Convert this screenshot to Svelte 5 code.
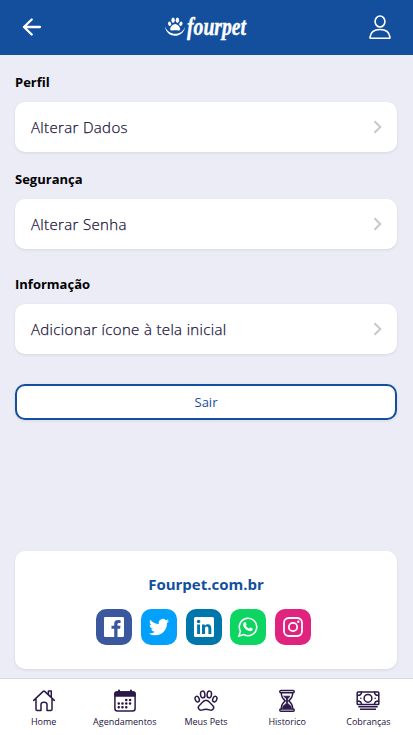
<script>
    const sections = [
        {title: 'Perfil', option: 'Alterar Dados'},
        {title: 'Segurança', option: 'Alterar Senha'},
        {title: 'Informação', option: 'Adicionar ícone à tela inicial'},
    ];

    const socials = ['facebook', 'twitter', 'linkedin', 'whatsapp', 'instagram'];

    const tabs = [
        {icon: 'home', label: 'Home'},
        {icon: 'calendar', label: 'Agendamentos'},
        {icon: 'paw', label: 'Meus Pets'},
        {icon: 'hourglass', label: 'Historico'},
        {icon: 'money', label: 'Cobranças'},
    ];
</script>

<div class="page">
    <header>
        <button class="icon-button" aria-label="Voltar">
            <svg width="20" height="20" viewBox="0 0 20 20" fill="none" stroke="#fff" stroke-width="2.3" stroke-linecap="round" stroke-linejoin="round">
                <path d="M18 9H2M9.700 1.500 2 9l7.700 7.500" />
            </svg>
        </button>
        <svg class="logo" width="84" height="34" viewBox="0 -4 84 34" fill="#fff">
            <ellipse cx="5.600" cy="8.700" rx="1.600" ry="2.200" transform="rotate(-20 5.600 8.700)" />
            <ellipse cx="9.100" cy="5.300" rx="1.700" ry="2.700" />
            <ellipse cx="13.400" cy="5.300" rx="1.700" ry="2.700" />
            <ellipse cx="16.900" cy="8.700" rx="1.600" ry="2.200" transform="rotate(20 16.900 8.700)" />
            <path d="M11.200 9c2.100 0 5 3 5 4.900 0 2.500-3 1.400-5 1.400s-5 1.100-5-1.400c0-1.900 2.900-4.900 5-4.900z" />
            <path d="M1 11.500c1.500 12 18 12.800 20.400-.3-3.200 9.800-16.400 10.200-20.400.3z" />
            <text class="brand" x="23" y="19.500" textLength="59" lengthAdjust="spacingAndGlyphs">fourpet</text>
        </svg>
        <button class="icon-button" aria-label="Conta">
            <svg width="22" height="25" viewBox="0 0 22 25" fill="none" stroke="#fff" stroke-width="1.600">
                <ellipse cx="11" cy="6.500" rx="4.900" ry="5.500" />
                <path d="M1 22.200c.7-5 4.600-7.700 10-7.700s9.300 2.700 10 7.700c.1.700-.2 1-.8 1H1.800c-.6 0-.9-.3-.8-1z" />
            </svg>
        </button>
    </header>

    <main>
        {#each sections as section, index (section.title)}
        <section class:last={index === sections.length - 1}>
            <h2>{section.title}</h2>
            <button class="card option">
                <span>{section.option}</span>
                <svg width="10" height="14" viewBox="0 0 10 14" fill="none" stroke="#c8c8c8" stroke-width="2">
                    <path d="M1.500 1.200 7.300 7l-5.800 5.800" />
                </svg>
            </button>
        </section>
        {/each}

        <button class="logout">Sair</button>

        <div class="card site">
            <strong>Fourpet.com.br</strong>
            <div class="socials">
                {#each socials as social (social)}
                <button class="social {social}" aria-label={social}>
                    <svg width="36" height="36" viewBox="0 0 36 36">
                        {#if social === 'facebook'}
                        <rect x="8" y="8" width="20" height="20" rx="1.200" fill="#fff" />
                        <path fill="#3b589e" d="M18.200 28v-8.200h-2.700v-3.100h2.700v-2c0-2.600 1.600-3.600 3.900-3.600q1.300 0 2.500.2v2.600h-1.500c-1.300 0-1.600.5-1.600 1.500v1.300h3l-.4 3.100h-2.600V28z" />
                        {:else if social === 'twitter'}
                        <path fill="#fff" transform="translate(7.900 8) scale(.84)" d="M23.950 4.570a10 10 0 0 1-2.820.770 4.960 4.960 0 0 0 2.160-2.720c-.95.550-2 .960-3.130 1.180a4.920 4.920 0 0 0-8.380 4.480C7.690 8.100 4.070 6.130 1.640 3.160a4.820 4.820 0 0 0-.66 2.480c0 1.700.87 3.210 2.190 4.100a4.900 4.900 0 0 1-2.230-.62v.060a4.920 4.920 0 0 0 3.950 4.830 5 5 0 0 1-2.210.080 4.940 4.940 0 0 0 4.600 3.420A9.870 9.870 0 0 1 0 19.540a13.990 13.990 0 0 0 7.560 2.210c9.050 0 14-7.500 14-13.980 0-.21 0-.42-.02-.63a9.940 9.940 0 0 0 2.460-2.550z" />
                        {:else if social === 'linkedin'}
                        <rect x="8" y="8" width="20" height="20" rx="1.500" fill="#fff" />
                        <g fill="#0077ab">
                            <circle cx="12.600" cy="12.500" r="1.800" />
                            <path d="M11.100 15.500H14V25h-2.900zM16 15.500h2.800v1.300c.6-1 1.600-1.600 3-1.600 2.700 0 3.500 1.800 3.500 4.500V25h-2.900v-4.800c0-1.500-.2-2.600-1.600-2.600s-1.800 1-1.800 2.500V25h-3z" />
                        </g>
                        {:else if social === 'whatsapp'}
                        <path d="m9 27 1.400-4.900a8.700 8.700 0 1 1 3.500 3.500z" fill="none" stroke="#fff" stroke-width="1.600" />
                        <path d="M14.100 13.600c.7-.8 1.500-.6 1.700.1l.6 1.500c.2.600-.3.900-.7 1.400.9 1.600 1.900 2.500 3.500 3.100.6-.6.900-1.300 1.400-1.100l1.900.9c.5.300.2 1.500-.3 2-1.300 1.200-3 .7-4.400.1-1.900-.9-3.500-2.500-4.400-4.400-.6-1.400-.3-2.700.7-3.600z" fill="#fff" />
                        {:else}
                        <rect x="9" y="9" width="18" height="18" rx="4.700" fill="none" stroke="#fff" stroke-width="1.800" />
                        <circle cx="18" cy="18" r="4.200" fill="none" stroke="#fff" stroke-width="1.800" />
                        <circle cx="23.300" cy="12.800" r="1.200" fill="#fff" />
                        {/if}
                    </svg>
                </button>
                {/each}
            </div>
        </div>
    </main>

    <nav>
        {#each tabs as tab (tab.label)}
        <button class="tab">
            <svg width="24" height="24" viewBox="0 0 24 24" fill="none" stroke="#2b1a47" stroke-width="1.500" stroke-linejoin="round" stroke-linecap="round">
                {#if tab.icon === 'home'}
                <path d="m1.700 11.400 9.500-9c.5-.4 1-.4 1.500 0l9.600 9M4 10v10.300c0 .8.400 1.200 1.200 1.200H9v-6c0-1.500 1-2.200 3-2.200s3 .700 3 2.200v6h3.800c.8 0 1.200-.4 1.200-1.200V10M16.400 5.500V2h2.900v6" />
                {:else if tab.icon === 'calendar'}
                <rect x="1.900" y="3" width="20.200" height="19" rx="2.500" />
                <path d="M2 4.500Q2 3 4 3h16q2 0 2 1.500V7H2z" fill="#2b1a47" />
                <path d="M6 1.500V4M18 1.500V4" stroke-width="2" />
                <path d="M13.200 11h.1M17 11h.1M5.700 14.600h.1M9.400 14.600h.1M13.200 14.600h.1M17 14.600h.1M5.700 18.200h.1M9.400 18.200h.1M13.200 18.200h.1" stroke-width="2.500" />
                {:else if tab.icon === 'paw'}
                <ellipse cx="3.200" cy="10.100" rx="2" ry="2.900" transform="rotate(-20 3.200 10.100)" />
                <ellipse cx="8.700" cy="5.500" rx="2.200" ry="3.400" transform="rotate(-7 8.700 5.500)" />
                <ellipse cx="15.300" cy="5.500" rx="2.200" ry="3.400" transform="rotate(7 15.300 5.500)" />
                <ellipse cx="20.800" cy="10.100" rx="2" ry="2.900" transform="rotate(20 20.800 10.100)" />
                <path d="M12 11.300c-3.200 0-4.200 3.200-6.200 4.700-3.300 2.500-.5 6.200 2.700 4.900 2.500-1 4.500-1 7 0 3.200 1.300 6-2.400 2.700-4.900-2-1.500-3-4.700-6.200-4.700z" />
                {:else if tab.icon === 'hourglass'}
                <rect x="4.800" y="1.500" width="14.400" height="2.200" rx="1" />
                <rect x="4.800" y="20" width="14.400" height="2.200" rx="1" />
                <path d="M6.300 4c0 4.100 1.800 6 4 7.800-2.200 1.600-4 3.700-4 7.800M17.700 4c0 4.100-1.800 6-4 7.800 2.200 1.600 4 3.700 4 7.800" />
                <path d="M9 7.200h6L12.500 10v4.200l3.700 3.200v2H7.800v-2l3.700-3.200V10z" fill="#2b1a47" stroke-width=".8" />
                {:else}
                <rect x="1.200" y="3" width="21.600" height="12.600" rx=".8" />
                <circle cx="12" cy="9.300" r="3.900" />
                <path d="M5.500 3c0 2-1.500 3.500-4 3.500M18.500 3c0 2 1.500 3.500 4 3.500M5.500 15.600c0-2-1.500-3.500-4-3.500M18.500 15.600c0-2 1.500-3.500 4-3.500M4.800 9.300h.1M19.100 9.300h.1" />
                <path d="M2.300 17.700h19.400M4 20.300h16" stroke-linecap="butt" />
                {/if}
            </svg>
            <span>{tab.label}</span>
        </button>
        {/each}
    </nav>
</div>

<style>
    :global(body) {
        background: #ebecf5;
    }

    .page {
        display: flex;
        flex-direction: column;
        height: 735px;
        overflow: hidden;
        font-family: "Open Sans", sans-serif;
        background: #ebecf5;
    }

    button {
        margin: 0;
        padding: 0;
        border: 0;
        background: none;
        font: inherit;
        color: inherit;
    }

    svg {
        display: block;
        flex: none;
    }

    header {
        display: flex;
        align-items: center;
        justify-content: space-between;
        box-sizing: border-box;
        height: 55px;
        padding: 0 22px;
        background: #144f9e;
    }

    .logo {
        overflow: visible;
    }

    .brand {
        font: italic bold 25px/1 "Liberation Serif", serif;
        stroke: #fff;
        stroke-width: .4px;
    }

    main {
        display: flex;
        flex: 1;
        flex-direction: column;
        padding: 17px 16px 9px 15px;
    }

    section {
        margin-bottom: 17px;
    }

    section.last {
        margin: 8px 0 30px;
    }

    h2 {
        margin: 0 0 10px;
        font-size: 13px;
        font-weight: 700;
        line-height: 20px;
        color: #000;
    }

    .card {
        box-sizing: border-box;
        width: 100%;
        border-radius: 10px;
        background: #fff;
        box-shadow: 0 1px 3px rgba(0, 0, 0, .09);
    }

    .option {
        display: flex;
        align-items: center;
        justify-content: space-between;
        height: 50px;
        padding: 0 14px 0 16px;
        font-size: 15px;
        font-weight: 300;
        letter-spacing: .34px;
        color: #20123a;
        -webkit-text-stroke: .25px #20123a;
    }

    .logout {
        box-sizing: border-box;
        height: 36px;
        border: 2px solid #144f9e;
        border-radius: 10px;
        background: #fff;
        box-shadow: 0 1px 3px rgba(0, 0, 0, .09);
        font-size: 13px;
        color: #144f9e;
    }

    .site {
        display: flex;
        flex-direction: column;
        align-items: center;
        height: 118px;
        margin-top: auto;
        padding-top: 23px;
    }

    .site strong {
        font-size: 15px;
        line-height: 21px;
        font-weight: 700;
        color: #144f9e;
    }

    .socials {
        display: flex;
        gap: 8.800px;
        margin-top: 14px;
        padding-right: 5px;
    }

    .social {
        width: 36px;
        height: 36px;
        border-radius: 10px;
    }

    .facebook {
        background: #3b589e;
    }

    .twitter {
        background: #03a1fc;
    }

    .linkedin {
        background: #0077ab;
    }

    .whatsapp {
        background: #0dd561;
    }

    .instagram {
        background: #e12380;
    }

    nav {
        display: flex;
        box-sizing: border-box;
        height: 57px;
        padding: 0 4px 0 3px;
        border-top: 1px solid #d5d8e7;
        background: #fff;
    }

    .tab {
        display: flex;
        flex: 1;
        flex-direction: column;
        align-items: center;
        padding-top: 10px;
        font-size: 9px;
        line-height: 12px;
        color: #20123a;
    }

    .tab span {
        margin-top: 3px;
    }
</style>
